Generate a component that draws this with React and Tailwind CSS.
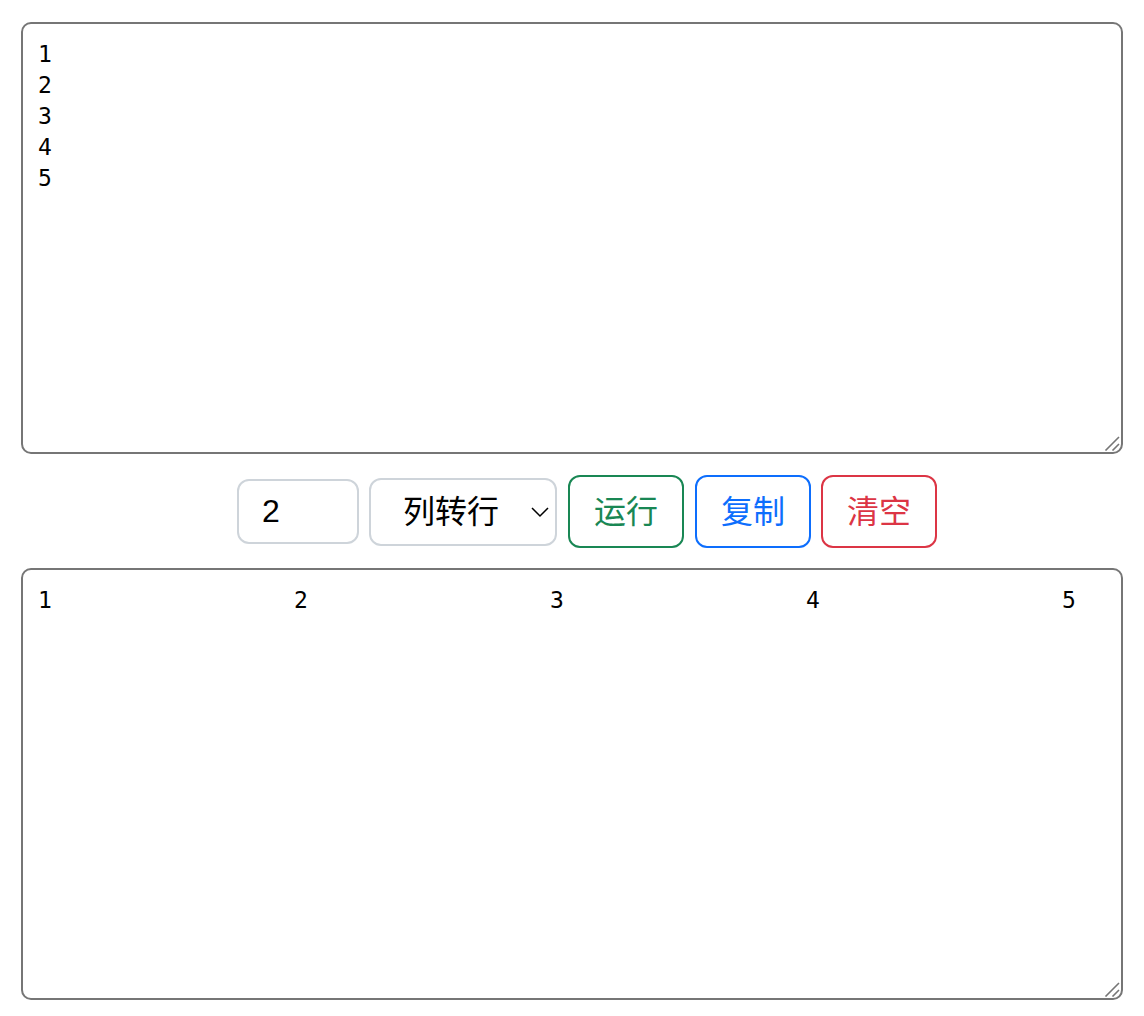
import { useState } from "react";

const areaClass =
  "block h-[432px] w-full resize-none overflow-hidden rounded-[10px] border-2 border-[#767676] bg-white px-[15px] py-[15px] font-['DejaVu_Sans_Mono','Noto_Sans_CJK_SC',monospace] text-[23px] leading-[31px] text-black outline-none";
const buttonClass =
  "h-[73px] w-[116px] rounded-xl border-2 bg-white text-[32px] leading-[48px]";

function Grip() {
  return (
    <svg
      className="pointer-events-none absolute right-[3px] bottom-[3px] h-4 w-4"
      viewBox="0 0 16 16"
      fill="none"
      stroke="#767676"
      strokeWidth="1.6"
      aria-hidden="true"
    >
      <path d="M1.5 15.5 15 2M8.5 15.5 15 9" />
    </svg>
  );
}

function Area({ label, value, onChange }) {
  return (
    <div className="relative">
      <textarea
        aria-label={label}
        className={areaClass}
        style={{ tabSize: "256px" }}
        spellCheck={false}
        value={value}
        onChange={(e) => onChange(e.target.value)}
      />
      <Grip />
    </div>
  );
}

export default function App() {
  const [input, setInput] = useState("1\n2\n3\n4\n5");
  const [output, setOutput] = useState("1\t2\t3\t4\t5");
  const [count, setCount] = useState("2");
  const [mode, setMode] = useState("row");

  const run = () => {
    const items = input.split(/\s+/).filter(Boolean);
    setOutput(items.join(mode === "row" ? "\t" : "\n"));
  };
  const clear = () => {
    setInput("");
    setOutput("");
  };

  return (
    <main className="bg-white px-[21px] pt-[22px] pb-4 font-['Liberation_Sans','Noto_Sans_CJK_SC',sans-serif] text-black">
      <Area label="输入" value={input} onChange={setInput} />
      <div className="mt-[21px] mb-5 flex items-center justify-center gap-[11px] pl-[30px]">
        <div className="flex items-center gap-[10px]">
          <input
            aria-label="列数"
            className="h-[65px] w-[122px] rounded-xl border-2 border-[#ced4da] bg-white px-[23px] text-[32px] outline-none"
            value={count}
            onChange={(e) => setCount(e.target.value)}
          />
          <div className="relative">
            <select
              aria-label="转换方式"
              className="block h-[68px] w-[188px] appearance-none rounded-xl border-2 border-[#ced4da] bg-white pl-8 text-[32px] outline-none"
              value={mode}
              onChange={(e) => setMode(e.target.value)}
            >
              <option value="row">列转行</option>
              <option value="column">行转列</option>
            </select>
            <svg
              className="pointer-events-none absolute top-[28px] right-[7px] h-3 w-5"
              viewBox="0 0 20 12"
              fill="none"
              stroke="black"
              strokeWidth="1.5"
              aria-hidden="true"
            >
              <path d="m2 2 8 8 8-8" />
            </svg>
          </div>
        </div>
        <button type="button" onClick={run} className={`${buttonClass} border-[#198754] text-[#198754]`}>
          运行
        </button>
        <div className="flex gap-[10px]">
          <button
            type="button"
            onClick={() => navigator.clipboard?.writeText(output)}
            className={`${buttonClass} border-[#0d6efd] text-[#0d6efd]`}
          >
            复制
          </button>
          <button type="button" onClick={clear} className={`${buttonClass} border-[#dc3545] text-[#dc3545]`}>
            清空
          </button>
        </div>
      </div>
      <Area label="输出" value={output} onChange={setOutput} />
    </main>
  );
}
